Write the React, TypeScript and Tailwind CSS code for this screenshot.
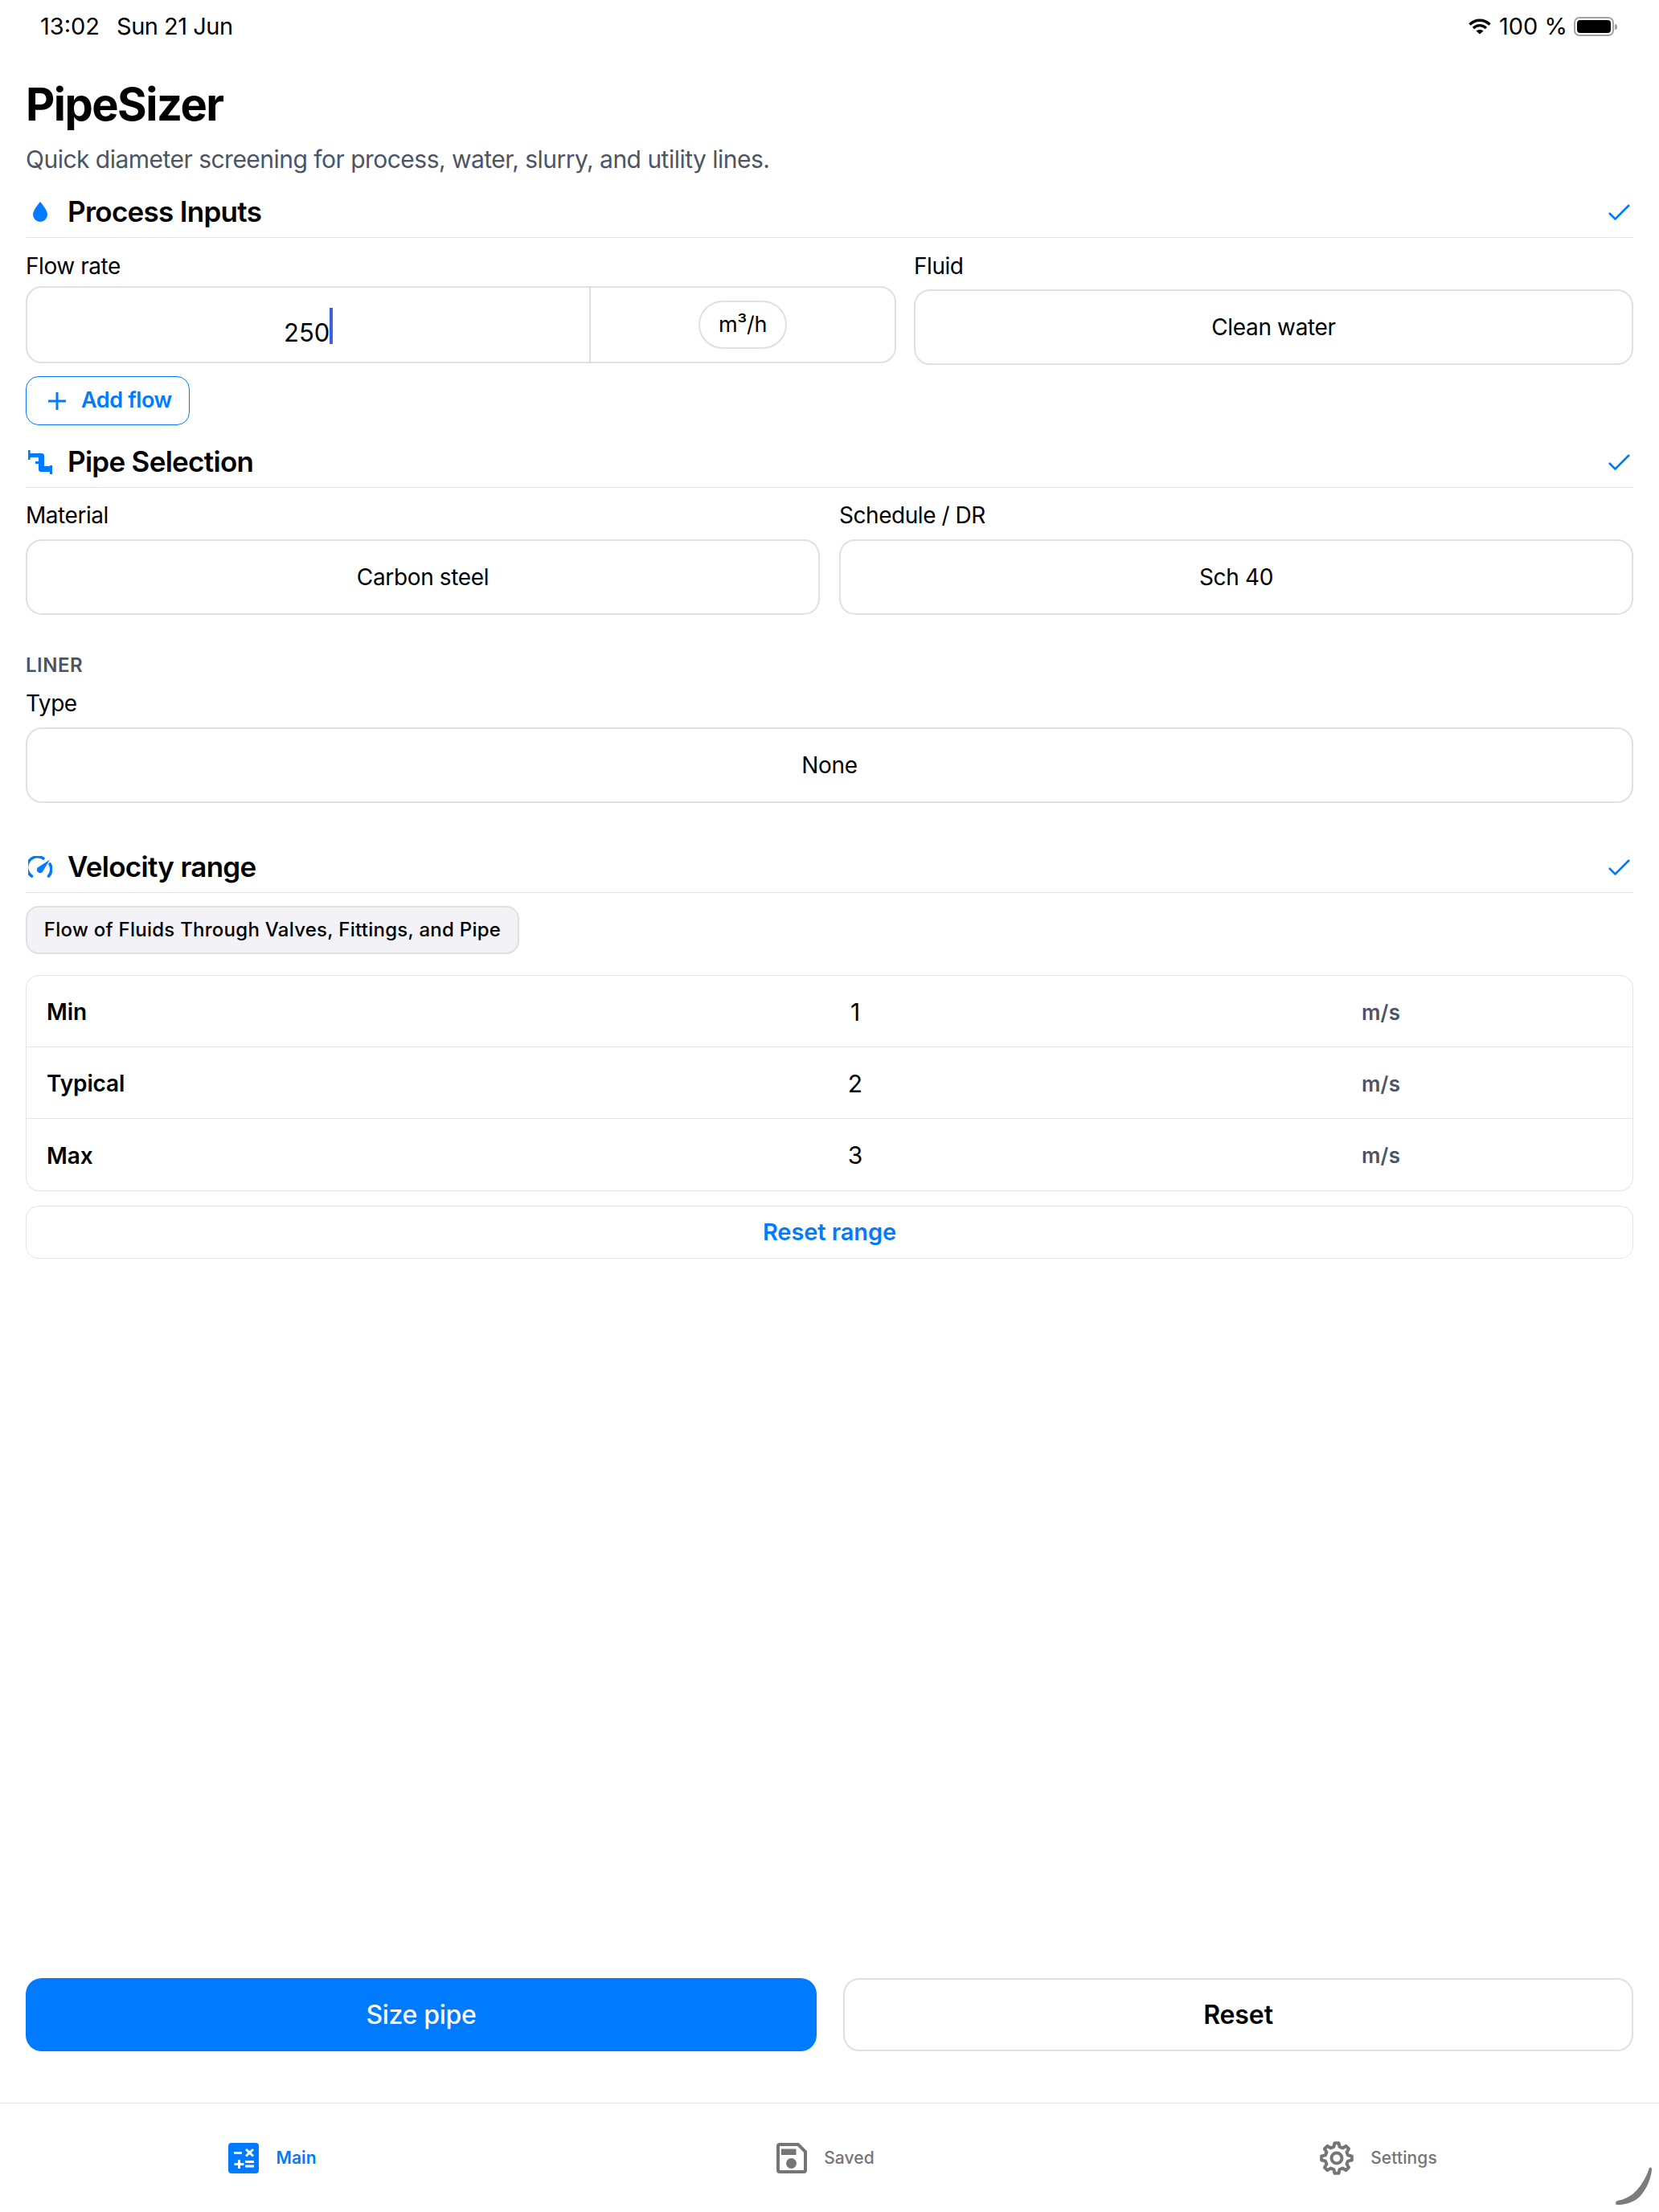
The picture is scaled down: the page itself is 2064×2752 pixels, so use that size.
import React from "react";

const font = { fontFamily: "Inter, 'Liberation Sans', sans-serif" };

function gearPath(cx: number, cy: number, outer: number, inner: number, teeth: number) {
  const pts: string[] = [];
  const step = (Math.PI * 2) / teeth;
  for (let i = 0; i < teeth; i++) {
    const a = -Math.PI / 2 + i * step;
    const w = step * 0.17;
    const list = [
      [inner, a - step * 0.32],
      [outer, a - w],
      [outer, a + w],
      [inner, a + step * 0.32],
    ];
    for (const [r, t] of list) {
      pts.push(`${(cx + r * Math.cos(t)).toFixed(2)} ${(cy + r * Math.sin(t)).toFixed(2)}`);
    }
  }
  return "M" + pts.join("L") + "Z";
}

function Check() {
  return (
    <svg width="27" height="20" viewBox="0 0 27 20" fill="none" stroke="#007AFF" strokeWidth="2.6">
      <path d="M1 11L8.5 18.5L26 1" />
    </svg>
  );
}

function SectionHeader({ icon, title, className }: { icon: React.ReactNode; title: string; className: string }) {
  return (
    <div className={`flex h-[60px] items-center border-b-[1.5px] border-[#e3e3e6] pr-[4px] pb-[4px] ${className}`}>
      <div className="flex w-[52px] items-center justify-start pl-[3px]">{icon}</div>
      <div className="flex-1 text-[35px] leading-none font-semibold tracking-[-0.7px] text-black">{title}</div>
      <Check />
    </div>
  );
}

function Label({ children, className = "" }: { children: React.ReactNode; className?: string }) {
  return <div className={`h-[36px] text-[28px] leading-[36px] tracking-[-0.45px] text-black ${className}`}>{children}</div>;
}

function SelectBox({ children }: { children: React.ReactNode }) {
  return (
    <div className="flex h-[94px] items-center justify-center rounded-[20px] border-2 border-[#e0e0e2] bg-white text-[28px] tracking-[-0.35px] text-black">
      {children}
    </div>
  );
}

function RangeRow({ label, value, last }: { label: string; value: string; last?: boolean }) {
  return (
    <div className={`flex h-[89px] items-center pt-[2px] ${last ? "" : "border-b-[1.5px] border-[#e3e3e6]"}`}>
      <div className="w-[900px] pl-[25px] text-[28px] font-semibold tracking-[-0.1px] text-black">{label}</div>
      <div className="w-[262px] text-center text-[30px] text-black">{value}</div>
      <div className="flex-1 pl-[499px] text-[26px] font-semibold tracking-[0.2px] text-[#4b5563]">m/s</div>
    </div>
  );
}

function TabItem({ icon, label, active }: { icon: React.ReactNode; label: string; active?: boolean }) {
  return (
    <div className="flex flex-1 items-center justify-center gap-[21px] pr-[10px]">
      {icon}
      <span className={`text-[21px] tracking-[0.1px] ${active ? "font-semibold text-[#007AFF]" : "font-medium text-[#757575]"}`}>{label}</span>
    </div>
  );
}

export default function App() {
  return (
    <div className="relative flex h-[2752px] w-[2064px] flex-col overflow-hidden bg-white" style={font}>
      {/* status bar */}
      <div className="flex h-[66px] items-center justify-between pr-[52px] pl-[50px] text-[29px] text-black">
        <div className="flex gap-[21px]">
          <span>13:02</span>
          <span className="tracking-[-0.5px]">Sun 21 Jun</span>
        </div>
        <div className="flex items-center">
          <svg width="28" height="20" viewBox="0 0 28 20" fill="none" stroke="#000" strokeWidth="3.4">
            <path d="M1.5 7.5C8.5 0.5 19.5 0.5 26.5 7.5" />
            <path d="M6 12C10.5 7.5 17.5 7.5 22 12" />
            <path d="M14 19.5L9.5 15.5C12 13.5 16 13.5 18.5 15.5Z" fill="#000" stroke="none" />
          </svg>
          <span className="ml-[10px]">100 %</span>
          <div className="ml-[8px] flex h-[24px] w-[50px] items-center justify-center rounded-[7px] border-2 border-[#a3a3a3]">
            <div className="h-[16px] w-[42px] rounded-[4px] bg-black" />
          </div>
          <div className="ml-[1px] h-[7px] w-[3px] rounded-r-full bg-[#a3a3a3]" />
        </div>
      </div>

      <div className="flex flex-1 flex-col px-[32px]">
        <h1 className="mt-[30px] h-[68px] text-[56px] leading-[68px] font-bold tracking-[-1.5px] text-black">PipeSizer</h1>
        <p className="mt-[14px] h-[40px] text-[30px] leading-[40px] tracking-[-0.52px] text-[#4b5563]">
          Quick diameter screening for process, water, slurry, and utility lines.
        </p>

        <SectionHeader
          className="mt-[18px]"
          title="Process Inputs"
          icon={
            <svg width="18" height="25" viewBox="0 0 18 25" className="ml-[6px]">
              <path d="M9 0C9 0 18 10 18 16A9 9 0 0 1 0 16C0 10 9 0 9 0Z" fill="#007AFF" />
            </svg>
          }
        />

        <div className="mt-[17px] flex gap-[22px]">
          <div className="w-[1083px]">
            <Label>Flow rate</Label>
            <div className="mt-[7px] flex h-[96px] rounded-[20px] border-2 border-[#e0e0e2] bg-white">
              <div className="flex w-[701px] items-center justify-center border-r-2 border-[#e0e0e2]">
                <span className="pt-[20px] text-[31px] text-black">250</span>
                <span className="mt-[3px] h-[45px] w-[3.5px] bg-[#3b63e0]" />
              </div>
              <div className="flex flex-1 items-center justify-center">
                <div className="flex h-[60px] w-[110px] items-center justify-center rounded-full border-2 border-[#e0e0e2] text-[27px] tracking-[-0.3px] text-black">
                  m³/h
                </div>
              </div>
            </div>
          </div>
          <div className="flex-1">
            <Label>Fluid</Label>
            <div className="mt-[11px]">
              <SelectBox>Clean water</SelectBox>
            </div>
          </div>
        </div>

        <div className="mt-[14px] flex h-[61px] w-[204px] items-center gap-[18px] rounded-[16px] border-[1.5px] border-[#007AFF] pl-[26px]">
          <svg width="24" height="24" viewBox="0 0 24 24" stroke="#007AFF" strokeWidth="3">
            <path d="M12 1V23M1 12H23" />
          </svg>
          <span className="text-[27px] font-semibold tracking-[-0.4px] text-[#007AFF]">Add flow</span>
        </div>

        <SectionHeader
          className="mt-[18px]"
          title="Pipe Selection"
          icon={
            <svg width="30" height="30" viewBox="0 0 30 30" fill="#007AFF">
              <rect x="0" y="0" width="2.6" height="12" />
              <rect x="27" y="19" width="3" height="11" />
              <path d="M2 4H17Q20 4 20 7V20H27V27H16Q13 27 13 24V17H9V14H13V9H2Z" />
            </svg>
          }
        />

        <div className="mt-[16px] grid grid-cols-2 gap-[24px]">
          <div>
            <Label>Material</Label>
            <div className="mt-[12px]">
              <SelectBox>Carbon steel</SelectBox>
            </div>
          </div>
          <div>
            <Label>Schedule / DR</Label>
            <div className="mt-[12px]">
              <SelectBox>Sch 40</SelectBox>
            </div>
          </div>
        </div>

        <div className="mt-[47px] h-[32px] text-[24px] leading-[32px] font-semibold tracking-[0.5px] text-[#4b5563]">LINER</div>
        <Label className="mt-[13px]">Type</Label>
        <div className="mt-[12px]">
          <SelectBox>None</SelectBox>
        </div>

        <SectionHeader
          className="mt-[52px]"
          title="Velocity range"
          icon={
            <svg width="30" height="28" viewBox="0 0 30 28" fill="none" stroke="#007AFF" strokeWidth="3.6" strokeLinecap="round">
              <path d="M4.5 25A12.5 12.5 0 0 1 19 3" />
              <path d="M27 10A12.5 12.5 0 0 1 25.5 25" />
              <path d="M27 4.5L17.9 19.8A4 4 0 1 1 12.1 14.2Z" fill="#007AFF" stroke="none" />
            </svg>
          }
        />

        <div className="mt-[16px] flex h-[60px] w-[614px] items-center justify-center rounded-[16px] border-2 border-[#e0e0e2] bg-[#f2f2f7] text-[24px] font-medium tracking-[0.26px] text-black">
          Flow of Fluids Through Valves, Fittings, and Pipe
        </div>

        <div className="mt-[26px] overflow-hidden rounded-[16px] border-[1.5px] border-[#e3e3e6]">
          <RangeRow label="Min" value="1" />
          <RangeRow label="Typical" value="2" />
          <RangeRow label="Max" value="3" last />
        </div>

        <div className="mt-[18px] flex h-[66px] items-center justify-center rounded-[16px] border-[1.5px] border-[#e3e3e6] text-[29px] font-semibold tracking-[-0.1px] text-[#007AFF]">
          Reset range
        </div>

        <div className="mt-auto mb-[64px] flex gap-[33px]">
          <button className="flex h-[91px] w-[984px] items-center justify-center rounded-[20px] bg-[#007AFF] text-[32px] font-medium tracking-[-0.3px] text-white">
            Size pipe
          </button>
          <button className="flex h-[91px] flex-1 items-center justify-center rounded-[20px] border-2 border-[#e0e0e2] bg-white text-[32px] font-semibold tracking-[-0.1px] text-black">
            Reset
          </button>
        </div>
      </div>

      {/* tab bar */}
      <div className="flex h-[136px] border-t-[1.5px] border-[#e3e3e6]">
        <TabItem
          active
          label="Main"
          icon={
            <svg width="38" height="38" viewBox="0 0 38 38">
              <rect width="38" height="38" rx="4" fill="#007AFF" />
              <path d="M7 12.5H17M22 8L31 16.5M31 8L22 16.5M13.5 21V32M7.5 26.5H19.5M21 23.5H32M21 29H32" stroke="#fff" strokeWidth="3" fill="none" />
            </svg>
          }
        />
        <TabItem
          label="Saved"
          icon={
            <svg width="38" height="38" viewBox="0 0 38 38">
              <path d="M2 4Q2 2 4 2H27L36 11V34Q36 36 34 36H4Q2 36 2 34Z" fill="none" stroke="#757575" strokeWidth="4" />
              <rect x="6" y="7.5" width="18.5" height="7.5" fill="#757575" />
              <circle cx="18.5" cy="25.5" r="6.5" fill="#757575" />
            </svg>
          }
        />
        <TabItem
          label="Settings"
          icon={
            <svg width="42" height="42" viewBox="0 0 42 42" fill="none" stroke="#757575" strokeWidth="4" strokeLinejoin="round">
              <path d={gearPath(21, 21, 19, 14.5, 8)} />
              <circle cx="21" cy="21" r="6.5" />
            </svg>
          }
        />
      </div>

      {/* pencil stroke in the corner */}
      <svg className="absolute top-[2695px] left-[2007px]" width="50" height="50" viewBox="0 0 50 50">
        <path d="M45 2C47 0.5 48.5 2 48 5C46 20 40 30 33 38C26 45 14 48 6 48C2.5 48 2 45 5 43C16 41 24 36 30 29C37 21 42 11 45 2Z" fill="#7c7c7c" />
      </svg>
    </div>
  );
}
